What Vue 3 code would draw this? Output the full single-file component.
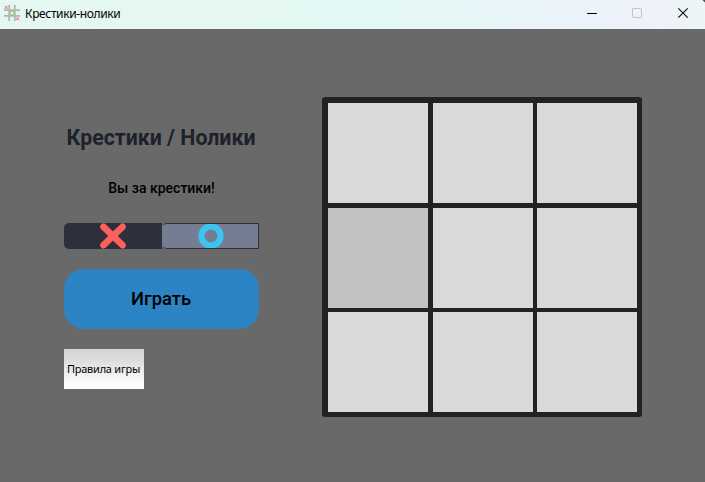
<script setup>
import { ref } from 'vue'

const side = ref('x')
const cells = ref(Array(9).fill(''))
const focused = ref(3)
</script>

<template>
  <div class="window">
    <header class="titlebar">
      <svg class="logo" width="16" height="16" viewBox="0 0 16 16" fill="none">
        <path d="M5.2 0V16M10.8 0V16M0 5.2H16M0 10.8H16" stroke="#87938f" stroke-opacity=".6" stroke-width="1.8" />
        <path d="M.6 .8L3.8 4M3.8 .8L.6 4M12 12.2L15.2 15.4M15.2 12.2L12 15.4" stroke="#f04440" stroke-opacity=".85" stroke-width=".9" />
        <circle cx="8" cy="8" r="1.9" stroke="#a0d070" fill="#eff8f0" stroke-width="1.1" />
      </svg>
      <span class="caption">Крестики-нолики</span>
      <div class="controls">
        <svg width="46" height="29" viewBox="0 0 46 29"><path d="M19 13.5H29" stroke="#000" /></svg>
        <svg width="45" height="29" viewBox="0 0 45 29"><rect x="18.5" y="8.5" width="9" height="9" rx=".6" fill="none" stroke="#bfc4c8" /></svg>
        <svg width="46" height="29" viewBox="0 0 46 29"><path d="M19.3 8.3L28.7 17.7M28.7 8.3L19.3 17.7" stroke="#111" stroke-width="1.2" /><path d="M43.5 0H46V2.5Z" fill="#4a4d50" /></svg>
      </div>
    </header>
    <main class="content">
      <section class="panel">
        <h1 class="title">Крестики / Нолики</h1>
        <p class="status">Вы за крестики!</p>
        <div class="switch">
          <button class="side cross" @click="side = 'x'">
            <svg width="28" height="26" viewBox="0 0 28 26"><path d="M4.5 3.8L23.5 22.2M23.5 3.8L4.5 22.2" stroke="#ff605c" stroke-width="6.6" stroke-linecap="round" /></svg>
          </button>
          <button class="side nought" @click="side = 'o'">
            <svg width="26" height="26" viewBox="0 0 26 26"><circle cx="13" cy="13" r="9.5" fill="none" stroke="#3cc4f4" stroke-width="6.2" /></svg>
          </button>
        </div>
        <button class="play">Играть</button>
        <button class="rules">Правила игры</button>
      </section>
      <section class="board">
        <button v-for="(cell, i) in cells" :key="i" class="cell" :class="{ focused: i === focused }">{{ cell }}</button>
      </section>
    </main>
  </div>
</template>

<style>
body {
  margin: 0;
  background: #696969;
}
</style>

<style scoped>
.window {
  width: 705px;
  height: 482px;
  overflow: hidden;
  background: #696969;
  color: #000;
}
.titlebar {
  display: flex;
  align-items: flex-start;
  height: 29px;
  background: linear-gradient(90deg, #e5f7f0 0%, #e4f8f5 55%, #eaf4fa 78%, #eef3fa 90%, #edf5f8 100%);
}
.logo {
  margin: 5px 0 0 4px;
}
.caption {
  margin: 5px 0 0 5px;
  font: 12px/17px "Noto Sans", sans-serif;
  letter-spacing: -0.36px;
}
.controls {
  display: flex;
  margin-left: auto;
}
.controls svg {
  display: block;
}
.content {
  display: flex;
  align-items: flex-start;
}
button {
  box-sizing: border-box;
  display: block;
  padding: 0;
  border: 0;
  color: #000;
}
.panel {
  width: 195px;
  margin: 96px 0 0 64px;
}
.title {
  margin: 0 1px 0 0;
  font: 700 21.33px/26px Roboto, sans-serif;
  color: #1d212b;
  text-align: center;
  white-space: nowrap;
}
.status {
  margin: 28px 0 0;
  font: 500 14px/18px Roboto, sans-serif;
  text-align: center;
}
.switch {
  display: flex;
  margin-top: 26px;
  height: 26px;
}
.side {
  display: flex;
  align-items: center;
  justify-content: center;
  height: 26px;
  overflow: hidden;
}
.side svg {
  flex: none;
}
.cross {
  width: 98px;
  border-radius: 5px 0 0 5px;
  background: #2d303b;
}
.nought {
  width: 97px;
  border: 1px solid #2d303b;
  border-left-color: #747d92;
  border-radius: 5px 0 0 5px;
  background: #747d92;
}
.play {
  width: 195px;
  height: 60px;
  margin-top: 20px;
  padding-right: 1px;
  border-radius: 20px;
  background: #2c84c4;
  font: 500 18.4px/60px Roboto, sans-serif;
}
.rules {
  width: 80px;
  height: 40px;
  margin-top: 20px;
  padding-right: 1px;
  background: linear-gradient(#d3d3d3 0%, #dedede 30%, #fff 90%);
  font: 11px/40px "Noto Sans", sans-serif;
  letter-spacing: -0.25px;
  white-space: nowrap;
}
.board {
  box-sizing: border-box;
  display: grid;
  grid-template: repeat(3, 100px) / repeat(3, 100px);
  place-content: space-between;
  width: 320px;
  height: 320px;
  margin: 68px 0 0 63px;
  padding: 6px 5px 5px 6px;
  border-radius: 3px;
  background: #222;
}
.cell {
  background: #d9d9d9;
}
.cell.focused {
  background: #c2c2c2;
}
</style>
